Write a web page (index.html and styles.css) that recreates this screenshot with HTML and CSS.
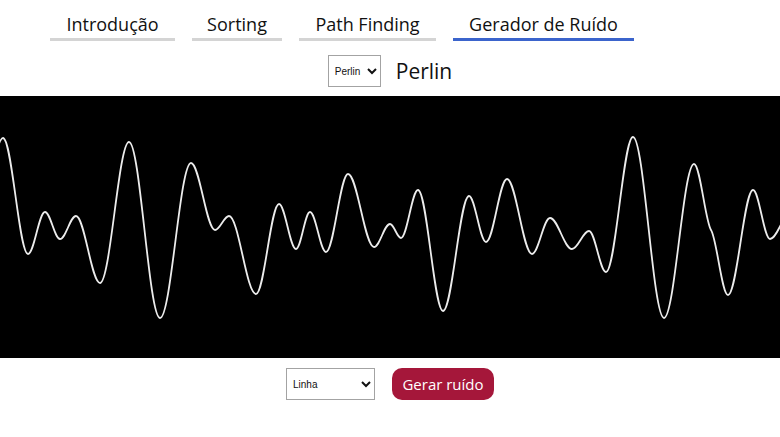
FILE: index.html
```html
<!DOCTYPE html>
<html lang="pt">
<head>
<meta charset="utf-8">
<title>Gerador de Ruído</title>
<link rel="stylesheet" href="styles.css">
</head>
<body>
  <nav class="tabs">
    <a class="tab tab-intro">Introdução</a>
    <a class="tab tab-sort">Sorting</a>
    <a class="tab tab-path">Path Finding</a>
    <a class="tab tab-noise active">Gerador de Ruído</a>
  </nav>

  <div class="title-row">
    <select class="picker picker-type">
      <option>Perlin</option>
      <option>Value</option>
      <option>Simplex</option>
    </select>
    <h1 class="title">Perlin</h1>
  </div>

  <div class="canvas">
    <svg class="wave" viewBox="0 96 780 262" width="780" height="262" preserveAspectRatio="none">
      <path d="M -25 254 C -14.9 254, -7.1 138, 3 138
        C 12 138, 19 254, 28 254
        C 34.1 254, 38.9 212, 45 212
        C 50.4 212, 54.6 239, 60 239
        C 65.8 239, 70.2 216, 76 216
        C 84.6 216, 91.4 283, 100 283
        C 110.4 283, 118.6 142, 129 142
        C 140.2 142, 148.8 318, 160 318
        C 171.2 318, 179.8 163, 191 163
        C 199.6 163, 206.4 230, 215 230
        C 220 230, 224 216, 229 216
        C 238.7 216, 246.3 294, 256 294
        C 264.3 294, 270.7 204, 279 204
        C 285.1 204, 289.9 249, 296 249
        C 301 249, 305 212, 310 212
        C 315.8 212, 320.2 252, 326 252
        C 333.9 252, 340.1 174, 348 174
        C 357.4 174, 364.6 247, 374 247
        C 379.8 247, 384.2 224, 390 224
        C 394 224, 397 238, 401 238
        C 407.1 238, 411.9 190, 418 190
        C 427 190, 434 311, 443 311
        C 452.4 311, 459.6 196, 469 196
        C 475.1 196, 479.9 242, 486 242
        C 493.6 242, 499.4 179, 507 179
        C 516 179, 523 254, 532 254
        C 538.5 254, 543.5 218, 550 218
        C 557.9 218, 564.1 249, 572 249
        C 578.1 249, 582.9 231, 589 231
        C 595.1 231, 599.9 272, 606 272
        C 615.7 272, 623.3 137, 633 137
        C 644.2 137, 652.8 318, 664 318
        C 674.8 318, 683.2 164, 694 164
        C 700.1 164, 705.3 221.5, 711 230
        C 716.7 238.5, 721.9 295, 728 295
        C 737 295, 744 190, 753 190
        C 759.1 190, 763.9 239, 770 239
        C 777.2 239, 782.8 214, 790 214"/>
    </svg>
  </div>

  <div class="controls">
    <select class="picker picker-mode">
      <option>Linha</option>
      <option>Pontos</option>
      <option>Imagem</option>
    </select>
    <button class="btn-generate" type="button">Gerar ruído</button>
  </div>
</body>
</html>
```

FILE: styles.css
```css
* {
  box-sizing: border-box;
}

html, body {
  margin: 0;
  padding: 0;
  background: #ffffff;
}

body {
  width: 780px;
  font-family: "Open Sans", "Liberation Sans", sans-serif;
  color: #111111;
}

.tabs {
  display: flex;
  gap: 17px;
  padding: 11px 0 0 50px;
}

.tab {
  display: block;
  text-align: center;
  font-size: 18px;
  line-height: 27px;
  color: #111111;
  border-bottom: 3px solid #d4d4d4;
  cursor: pointer;
}

.tab.active {
  border-bottom-color: #3b64cc;
}

.tab-intro { width: 125px; }
.tab-sort { width: 90px; }
.tab-path { width: 137px; }
.tab-noise { width: 181px; }

.title-row {
  display: flex;
  justify-content: center;
  align-items: center;
  gap: 15px;
  margin-top: 14px;
  height: 32px;
}

.title {
  margin: 0;
  font-size: 21px;
  font-weight: 400;
  line-height: 32px;
  color: #111111;
}

.picker {
  height: 32px;
  border: 1px solid #a3a3a3;
  border-radius: 0;
  background: #ffffff;
  font-family: "Liberation Sans", Arial, sans-serif;
  font-size: 10px;
  color: #111111;
  padding: 0 2px;
}

.picker-type { width: 53px; }
.picker-mode { width: 89px; }

.canvas {
  margin-top: 9px;
  height: 262px;
  background: #000000;
  overflow: hidden;
}

.wave {
  display: block;
}

.wave path {
  fill: none;
  stroke: #ececec;
  stroke-width: 1.8;
  stroke-linecap: round;
  stroke-linejoin: round;
}

.controls {
  display: flex;
  justify-content: center;
  align-items: center;
  gap: 17px;
  margin-top: 10px;
}

.btn-generate {
  width: 102px;
  height: 32px;
  border: none;
  border-radius: 10px;
  background: #a5173a;
  color: #ffffff;
  font-family: "Open Sans", "Liberation Sans", sans-serif;
  font-size: 15px;
  padding: 0;
  cursor: pointer;
}
```
